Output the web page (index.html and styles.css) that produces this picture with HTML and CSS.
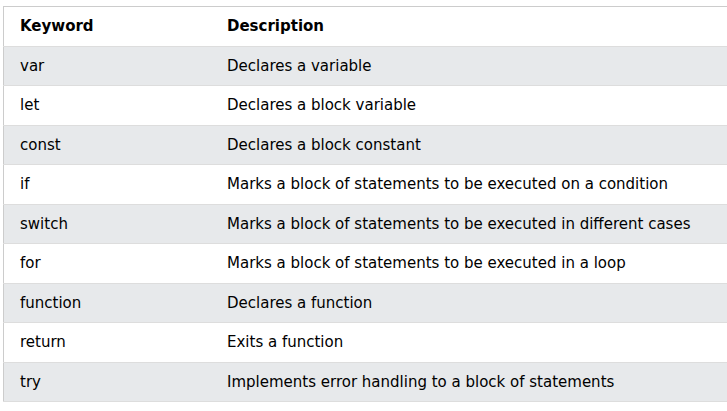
FILE: index.html
```html
<!DOCTYPE html>
<html>
<head>
<meta charset="utf-8">
<link rel="stylesheet" href="styles.css">
</head>
<body>
<table class="kw-table">
  <tr class="head"><th>Keyword</th><th>Description</th></tr>
  <tr class="odd"><td>var</td><td>Declares a variable</td></tr>
  <tr><td>let</td><td>Declares a block variable</td></tr>
  <tr class="odd"><td>const</td><td>Declares a block constant</td></tr>
  <tr><td>if</td><td>Marks a block of statements to be executed on a condition</td></tr>
  <tr class="odd"><td>switch</td><td>Marks a block of statements to be executed in different cases</td></tr>
  <tr><td>for</td><td>Marks a block of statements to be executed in a loop</td></tr>
  <tr class="odd"><td>function</td><td>Declares a function</td></tr>
  <tr><td>return</td><td>Exits a function</td></tr>
  <tr class="odd"><td>try</td><td>Implements error handling to a block of statements</td></tr>
</table>
</body>
</html>
```
FILE: styles.css
```css
html, body {
  margin: 0;
  padding: 0;
  background: #fff;
  overflow: hidden;
}
body {
  padding: 6px 0 0 3px;
  font-family: "DejaVu Sans", Verdana, sans-serif;
  font-size: 15px;
  color: #000;
}
.kw-table {
  border-collapse: collapse;
  border-spacing: 0;
  width: 725px;
  border: 1px solid #ccc;
}
.kw-table th, .kw-table td {
  padding: 8px 8px;
  height: 22.5px;
  line-height: 22.5px;
  text-align: left;
  vertical-align: top;
}
.kw-table th {
  font-weight: bold;
}
.kw-table th:first-child, .kw-table td:first-child {
  padding-left: 16px;
  width: 191px;
}
.kw-table tr {
  border-bottom: 1px solid #ddd;
}
.kw-table tr.odd {
  background: #e7e9eb;
}
```
